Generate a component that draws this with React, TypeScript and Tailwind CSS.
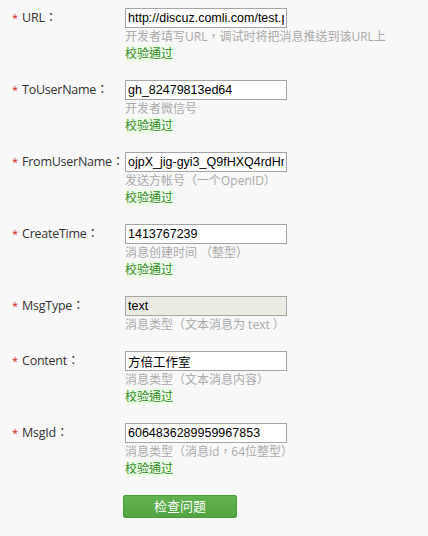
const fields = [
  { label: "URL：", value: "http://discuz.comli.com/test.php", hint: "开发者填写URL，调试时将把消息推送到该URL上", ok: true },
  { label: "ToUserName：", value: "gh_82479813ed64", hint: "开发者微信号", ok: true },
  { label: "FromUserName：", value: "ojpX_jig-gyi3_Q9fHXQ4rdHniQs", hint: "发送方帐号（一个OpenID）", ok: true },
  { label: "CreateTime：", value: "1413767239", hint: "消息创建时间 （整型）", ok: true },
  { label: "MsgType：", value: "text", hint: "消息类型（文本消息为 text ）", ok: false, disabled: true },
  { label: "Content：", value: "方倍工作室", hint: "消息类型（文本消息内容）", ok: true },
  { label: "MsgId：", value: "6064836289959967853", hint: "消息类型（消息id，64位整型）", ok: true },
];

export default function App() {
  return (
    <div className="min-h-[536px] w-[428px] bg-[#f8f8f8] pt-2 font-['Open_Sans','Noto_Sans_CJK_TC',sans-serif] text-[13px]">
      {fields.map((f) => (
        <div key={f.label} className="mb-[18px] flex">
          <div className="flex w-[125px] shrink-0 pl-[12px] leading-[20px] text-[#333]">
            <span className="mr-[4px] text-[11px] text-[#d02020]">*</span>
            <span className="text-[12.5px] tracking-[-0.25px]">{f.label}</span>
          </div>
          <div className="flex flex-col">
            <input
              readOnly
              disabled={f.disabled}
              value={f.value}
              className={`h-[20px] w-[162px] border border-[#a5a5a5] px-[2px] font-['Liberation_Sans','Noto_Sans_CJK_SC',sans-serif] text-[12.5px] text-black outline-none ${f.disabled ? "bg-[#ebebe4] text-[#444]" : "bg-white"}`}
            />
            <div className="h-[17px] text-[12px] leading-[17px] whitespace-nowrap text-[#aaa]">{f.hint}</div>
            {f.ok && (
              <div className="h-[17px] text-[12px] leading-[17px] text-[#2e8b1e]">
                <span className="bg-[#eefbe8]">校验通过</span>
              </div>
            )}
          </div>
        </div>
      ))}
      <div className="pl-[123px]">
        <button className="h-[23px] w-[114px] rounded-[2px] border border-[#4a9a3a] bg-gradient-to-b from-[#62b250] to-[#52a342] text-[13px] text-white">
          检查问题
        </button>
      </div>
    </div>
  );
}
